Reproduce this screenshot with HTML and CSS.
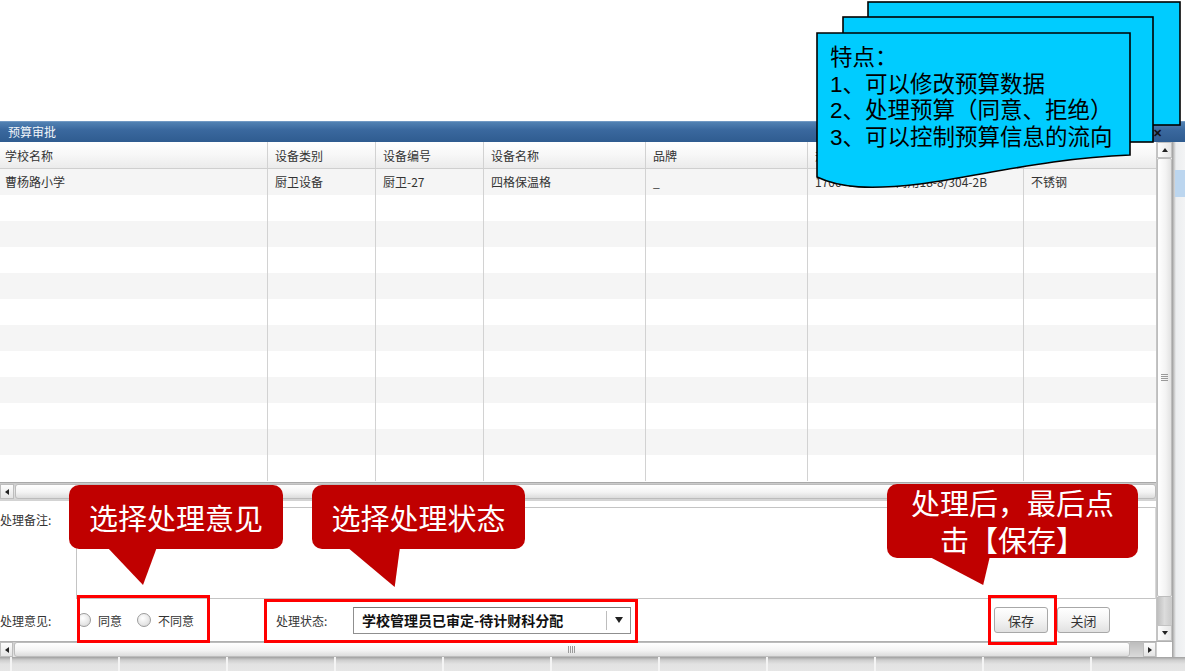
FILE: index.html
```html
<!DOCTYPE html>
<html lang="zh-CN">
<head>
<meta charset="utf-8">
<title>预算审批</title>
<link rel="stylesheet" href="styles.css">
</head>
<body>
<div class="page">
  <div class="top-space"></div>
  <div class="titlebar"><span class="title">预算审批</span><span class="close">✕</span></div>
  <div class="main">
    <div class="win">
      <div class="win-inner">
        <div class="content">
          <div class="grid">
            <div class="row head">
              <div class="cell first">学校名称</div>
              <div class="cell">设备类别</div>
              <div class="cell">设备编号</div>
              <div class="cell">设备名称</div>
              <div class="cell">品牌</div>
              <div class="cell">规格型号</div>
              <div class="cell last">材质</div>
            </div>
            <div class="row alt">
              <div class="cell first">曹杨路小学</div>
              <div class="cell">厨卫设备</div>
              <div class="cell">厨卫-27</div>
              <div class="cell">四格保温格</div>
              <div class="cell">_</div>
              <div class="cell">1700*600*800 商用18-8/304-2B</div>
              <div class="cell last">不锈钢</div>
            </div>
            <div class="row"><div class="cell first"></div><div class="cell"></div><div class="cell"></div><div class="cell"></div><div class="cell"></div><div class="cell"></div><div class="cell last"></div></div>
            <div class="row alt"><div class="cell first"></div><div class="cell"></div><div class="cell"></div><div class="cell"></div><div class="cell"></div><div class="cell"></div><div class="cell last"></div></div>
            <div class="row"><div class="cell first"></div><div class="cell"></div><div class="cell"></div><div class="cell"></div><div class="cell"></div><div class="cell"></div><div class="cell last"></div></div>
            <div class="row alt"><div class="cell first"></div><div class="cell"></div><div class="cell"></div><div class="cell"></div><div class="cell"></div><div class="cell"></div><div class="cell last"></div></div>
            <div class="row"><div class="cell first"></div><div class="cell"></div><div class="cell"></div><div class="cell"></div><div class="cell"></div><div class="cell"></div><div class="cell last"></div></div>
            <div class="row alt"><div class="cell first"></div><div class="cell"></div><div class="cell"></div><div class="cell"></div><div class="cell"></div><div class="cell"></div><div class="cell last"></div></div>
            <div class="row"><div class="cell first"></div><div class="cell"></div><div class="cell"></div><div class="cell"></div><div class="cell"></div><div class="cell"></div><div class="cell last"></div></div>
            <div class="row alt"><div class="cell first"></div><div class="cell"></div><div class="cell"></div><div class="cell"></div><div class="cell"></div><div class="cell"></div><div class="cell last"></div></div>
            <div class="row"><div class="cell first"></div><div class="cell"></div><div class="cell"></div><div class="cell"></div><div class="cell"></div><div class="cell"></div><div class="cell last"></div></div>
            <div class="row alt"><div class="cell first"></div><div class="cell"></div><div class="cell"></div><div class="cell"></div><div class="cell"></div><div class="cell"></div><div class="cell last"></div></div>
            <div class="row"><div class="cell first"></div><div class="cell"></div><div class="cell"></div><div class="cell"></div><div class="cell"></div><div class="cell"></div><div class="cell last"></div></div>
          </div>
          <div class="hscroll grid-hs">
            <div class="hs-btn"><span class="arr-left"></span></div>
            <div class="hs-thumb"></div>
          </div>
          <div class="form">
            <div class="form-row remark">
              <div class="lbl">处理备注:</div>
              <div class="textarea"></div>
            </div>
            <div class="form-row opts">
              <div class="lbl">处理意见:</div>
              <span class="radio r1"></span><span class="rtxt">同意</span>
              <span class="radio r2"></span><span class="rtxt">不同意</span>
              <div class="state-lbl">处理状态:</div>
              <div class="combo">
                <div class="combo-text">学校管理员已审定-待计财科分配</div>
                <div class="combo-trig"><span class="arr-down"></span></div>
              </div>
              <div class="btn save">保存</div>
              <div class="btn closebtn">关闭</div>
            </div>
          </div>
        </div>
        <div class="vscroll">
          <div class="vs-btn"><span class="arr-up"></span></div>
          <div class="vs-thumb"><span class="grip-h"></span></div>
          <div class="vs-track"></div>
          <div class="vs-btn"><span class="arr-down small"></span></div>
        </div>
      </div>
      <div class="hscroll bottom-hs">
        <div class="hs-btn"><span class="arr-left"></span></div>
        <div class="hs-thumb"><span class="grip-v"></span></div>
        <div class="hs-track"></div>
        <div class="hs-btn"><span class="arr-right"></span></div>
        <div class="corner"></div>
      </div>
    </div>
    <div class="outside"><div class="outside-sel"></div></div>
  </div>
  <div class="footer-strip"></div>
</div>

<svg class="docs" width="1185" height="200" viewBox="0 0 1185 200">
  <rect x="868" y="2" width="312" height="123" fill="#00ccff" stroke="#000" stroke-width="1.6"/>
  <rect x="843" y="17" width="310" height="125" fill="#00ccff" stroke="#000" stroke-width="1.6"/>
  <path d="M817,33 H1130 V155 C1050,158 985,175 920,184 C870,190 840,188 817,177 Z" fill="#00ccff" stroke="#000" stroke-width="1.6"/>
</svg>
<div class="doc-text">
  <div>特点：</div>
  <div>1、可以修改预算数据</div>
  <div>2、处理预算（同意、拒绝）</div>
  <div>3、可以控制预算信息的流向</div>
</div>

<div class="hl hl-a"></div>
<div class="hl hl-b"></div>
<div class="hl hl-c"></div>

<div class="callout ca">选择处理意见</div>
<div class="callout cb">选择处理状态</div>
<div class="callout cc"><div class="cc-line">处理后，最后点</div><div class="cc-line">击【保存】</div></div>
</body>
</html>
```
FILE: styles.css
```css
* { box-sizing: border-box; margin: 0; padding: 0; }
html, body { width: 1185px; height: 671px; overflow: hidden; }
body {
  position: relative;
  background: #fff;
  color: #333;
  font-family: "Noto Sans CJK SC", "Liberation Sans", sans-serif;
  font-size: 12px;
}
.page { display: flex; flex-direction: column; height: 671px; }
.top-space { height: 121px; flex: none; }

.titlebar {
  height: 21px; flex: none;
  display: flex; align-items: center; justify-content: space-between;
  padding: 0 23px 0 8px;
  background: linear-gradient(#5282b3, #3a689e 40%, #2f5c90);
  border-top: 1px solid #7199c4;
  color: #f2f6fa;
}
.title { font-size: 12px; line-height: 1; }
.close { color: #111; font-size: 11px; font-weight: bold; line-height: 1; }

.main { display: flex; flex: none; height: 515px; }
.win { width: 1172px; display: flex; flex-direction: column; background: #fff; }
.win-inner { display: flex; height: 499px; flex: none; }
.content { width: 1156px; display: flex; flex-direction: column; }

.grid { height: 339px; flex: none; }
.row {
  display: grid;
  grid-template-columns: 268px 108px 108px 162px 162px 216px 132px;
  height: 26px;
  background: #fff;
}
.row.alt { background: #f5f5f5; }
.row.head {
  height: 27px;
  background: linear-gradient(#ffffff, #f7f7f7 50%, #ebebeb);
  border-bottom: 1px solid #cfcfcf;
}
.cell {
  border-right: 1px solid #d2d2d2;
  padding-left: 7px;
  line-height: 26px;
  white-space: nowrap;
  overflow: hidden;
  color: #333;
}
.head .cell { line-height: 24px; padding-top: 2px; }
.cell.first { padding-left: 5px; }
.cell.last { border-right: none; }

.hscroll { display: flex; flex: none; }
.grid-hs {
  height: 19px; margin-top: 1px;
  background: linear-gradient(#c9c9c9, #e6e6e6 40%, #d2d2d2);
  border-top: 1px solid #a9a9a9;
  padding: 1px 0 2px;
}
.hs-btn {
  width: 14px; flex: none;
  display: flex; align-items: center; justify-content: center;
  background: linear-gradient(#fdfdfd, #e4e4e4);
  border: 1px solid #bdbdbd;
}
.hs-thumb {
  flex: 1;
  display: flex; align-items: center; justify-content: center;
  background: linear-gradient(#ffffff, #f4f4f4 55%, #dcdcdc);
  border: 1px solid #bcbcbc;
  border-radius: 3px;
  margin-left: 1px;
}
.arr-left { width: 0; height: 0; border-top: 3px solid transparent; border-bottom: 3px solid transparent; border-right: 4px solid #222; }
.arr-right { width: 0; height: 0; border-top: 3px solid transparent; border-bottom: 3px solid transparent; border-left: 4px solid #222; }
.arr-up { width: 0; height: 0; border-left: 3px solid transparent; border-right: 3px solid transparent; border-bottom: 4px solid #222; }
.arr-down { width: 0; height: 0; border-left: 4px solid transparent; border-right: 4px solid transparent; border-top: 6px solid #222; }
.arr-down.small { border-left-width: 3px; border-right-width: 3px; border-top-width: 4px; }

.form { flex: 1; display: flex; flex-direction: column; padding-top: 6px; }
.form-row { display: flex; }
.lbl { width: 76px; flex: none; color: #333; }
.remark { height: 92px; }
.remark .lbl { padding-top: 4px; line-height: 18px; }
.textarea {
  flex: 1;
  border: 1px solid #c4c4c4;
  border-right-color: #d8d8d8;
  background: #fff;
}
.opts { flex: 1; align-items: center; }
.radio {
  width: 14px; height: 14px; flex: none;
  border-radius: 50%;
  border: 1px solid #9c9c9c;
  background: radial-gradient(circle at 40% 35%, #ffffff, #e6e6e6 60%, #cfcfcf);
}
.r1 { margin-left: 1px; }
.r2 { margin-left: 15px; }
.rtxt { margin-left: 7px; color: #333; }
.state-lbl { width: 77px; margin-left: 82px; flex: none; color: #333; }
.combo {
  width: 278px; height: 27px; flex: none;
  display: flex; align-items: center;
  border: 1px solid #8f8f8f;
  border-top-color: #777;
  background: #fff;
}
.combo-text {
  flex: 1; padding-left: 8px;
  font-size: 14px; font-weight: bold; color: #111;
  white-space: nowrap; overflow: hidden;
}
.combo-trig {
  width: 24px; height: 19px; flex: none;
  display: flex; align-items: center; justify-content: center;
  border-left: 1px solid #bdbdbd;
}
.btn {
  height: 26px; flex: none;
  display: flex; align-items: center; justify-content: center;
  border: 1px solid #a8a8a8;
  border-radius: 3px;
  background: linear-gradient(#ffffff, #f3f3f3 50%, #e1e1e1);
  font-size: 13px; color: #333;
}
.save { width: 54px; margin-left: auto; }
.closebtn { width: 53px; margin-left: 9px; margin-right: 46px; }

.vscroll {
  width: 16px; flex: none;
  display: flex; flex-direction: column;
  border-left: 1px solid #c4c4c4;
  background: #efefef;
}
.vs-btn {
  height: 16px; flex: none;
  display: flex; align-items: center; justify-content: center;
  background: linear-gradient(to right, #fdfdfd, #e6e6e6);
  border: 1px solid #c2c2c2;
}
.vs-thumb {
  height: 439px; flex: none;
  display: flex; align-items: center; justify-content: center;
  background: linear-gradient(to right, #ffffff, #f3f3f3 60%, #e2e2e2);
  border: 1px solid #bdbdbd;
  border-radius: 2px;
}
.grip-h {
  width: 7px; height: 8px;
  background: repeating-linear-gradient(#9a9a9a 0 1px, transparent 1px 2px);
}
.grip-v {
  width: 8px; height: 7px;
  background: repeating-linear-gradient(to right, #9a9a9a 0 1px, transparent 1px 2px);
}
.vs-track { flex: 1; background: linear-gradient(to right, #bdbdbd, #dcdcdc 50%, #c9c9c9); }

.bottom-hs {
  height: 16px;
  background: linear-gradient(#cfcfcf, #e6e6e6);
  border-top: 1px solid #b0b0b0;
}
.bottom-hs .hs-btn { width: 13px; }
.bottom-hs .hs-thumb { flex: none; width: 1116px; }
.hs-track { flex: 1; background: linear-gradient(#bcbcbc, #dadada); }
.corner { width: 16px; flex: none; background: #fff; border-left: 1px solid #d0d0d0; }

.outside {
  width: 13px; flex: none;
  background: linear-gradient(to right, #9c9c9c 0, #c6c6c6 2px, #eceef0 4px, #f3f4f5);
  padding-top: 28px;
}
.outside-sel { height: 27px; margin-left: 3px; background: #bcd6ef; }
.footer-strip {
  flex: 1;
  background:
    repeating-linear-gradient(to right, transparent 0 10px, #f4f4f4 10px 12px, transparent 12px 108px),
    linear-gradient(#9f9f9f, #cdcdcd 3px, #e2e2e2 7px, #e6e6e6);
}

/* annotation overlays */
.docs { position: absolute; left: 0; top: 0; pointer-events: none; }
.doc-text {
  position: absolute; left: 830px; top: 45px;
  font-family: "Liberation Sans", "Noto Sans CJK SC", sans-serif;
  font-size: 22.5px; line-height: 26.7px; color: #000;
  white-space: nowrap;
}
.hl { position: absolute; border: 3px solid #ff0000; }
.hl-a { left: 77px; top: 595px; width: 133px; height: 48px; }
.hl-b { left: 264px; top: 599px; width: 374px; height: 44px; }
.hl-c { left: 988px; top: 595px; width: 69px; height: 50px; }

.callout {
  position: absolute;
  display: flex; align-items: center; justify-content: center;
  text-align: center;
  background: #c00000;
  color: #fff;
  border-radius: 10px;
  font-family: "Noto Sans CJK SC", sans-serif;
  font-size: 29px; line-height: 37px;
}
.callout::after {
  content: "";
  position: absolute;
  background: #c00000;
}
.ca { left: 69px; top: 485px; width: 214px; height: 64px; }
.ca::after { left: 38px; top: 62px; width: 50px; height: 38px; clip-path: polygon(0 0, 100% 0, 72% 100%); }
.cb { left: 312px; top: 485px; width: 213px; height: 64px; }
.cb::after { left: 35px; top: 62px; width: 53px; height: 40px; clip-path: polygon(0 0, 100% 0, 90% 100%); }
.cc {
  left: 887px; top: 484px; width: 251px; height: 74px;
  flex-direction: column;
  font-family: "Liberation Sans", "Noto Sans CJK SC", sans-serif;
  padding-top: 5px;
}
.cc-line { height: 37px; line-height: 37px; white-space: nowrap; }
.cc::after { left: 41px; top: 72px; width: 62px; height: 29px; clip-path: polygon(0 0, 100% 0, 89% 100%); }
```
